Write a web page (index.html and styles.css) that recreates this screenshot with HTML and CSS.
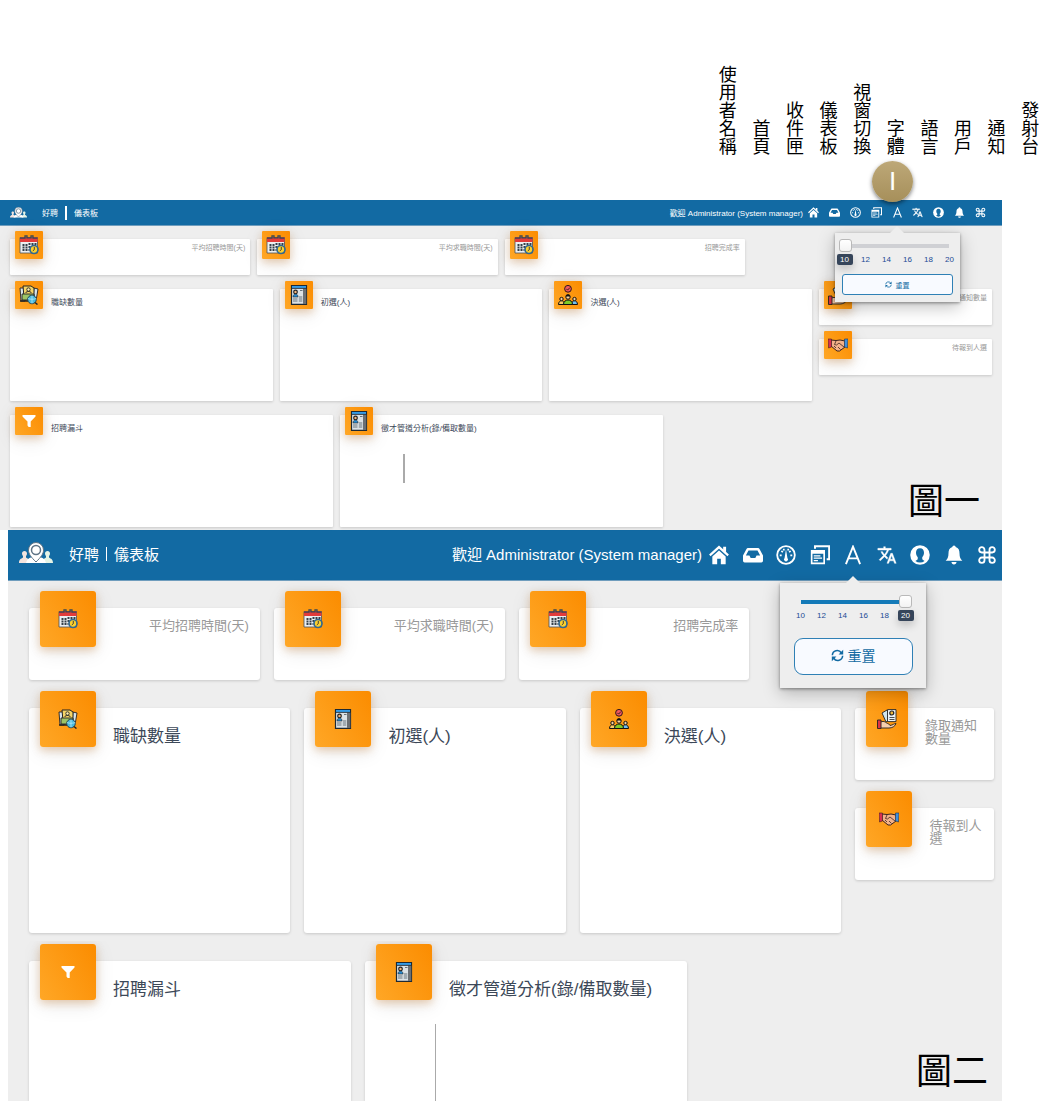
FILE: index.html
```html
<!DOCTYPE html>
<html lang="zh-Hant">
<head>
<meta charset="utf-8">
<meta name="viewport" content="width=device-width, initial-scale=1">
<title>好聘 儀表板</title>
<link rel="stylesheet" href="styles.css">
</head>
<body>
<svg class="sprite" aria-hidden="true">
  <symbol id="logo" viewBox="0 0 34 22">
    <path d="M0 21c0-4 2-4 4-5.500V14c-.6-.6-1-1.500-1-2.500C3 10 4 9 5.500 9S8 10 8 11.500c0 1-.4 1.900-1 2.500v1.500c2 1.500 4 1.500 4 5.500z" fill="#f3e4de"/>
    <path d="M23 21c0-4 2-4 4-5.500V14c-.6-.6-1-1.500-1-2.500C26 10 27 9 28.500 9s2.500 1 2.500 2.500c0 1-.4 1.900-1 2.500v1.500c2 1.500 4 1.500 4 5.500z" fill="#e4f3e6"/>
    <path d="M7 21c1-4 3-5 6-6h8c3 1 5 2 6 6z" fill="#fff"/>
    <path d="M17 20C12 15 9.500 12 9.500 8a7.500 7.500 0 0 1 15 0c0 4-2.500 7-7.500 12z" fill="#fff" stroke="#5f7486" stroke-width="1"/>
    <circle cx="17" cy="8" r="4.500" fill="#fff" stroke="#5f7486" stroke-width="1.500"/>
  </symbol>
  <symbol id="home" viewBox="0 0 24 24">
    <path d="M1 12.500 12 2.500l11 10" fill="none" stroke="currentColor" stroke-width="2.600"/>
    <path d="M17 2h3.500v7L17 6z" fill="currentColor"/>
    <path d="m12 6.500-8 7.200V23h5.800v-6.500h4.400V23H20v-9.300z" fill="currentColor"/>
  </symbol>
  <symbol id="inbox" viewBox="0 0 24 24">
    <path fill="currentColor" fill-rule="evenodd" d="M6 3.500h12a2 2 0 0 1 1.800 1.200L24 12.500V19a2 2 0 0 1-2 2H2a2 2 0 0 1-2-2v-6.500l4.200-7.800A2 2 0 0 1 6 3.500zm.6 3L3.400 12.500h4.300l1.500 3h5.600l1.500-3h4.300l-3.200-6z"/>
  </symbol>
  <symbol id="gauge" viewBox="0 0 24 24">
    <circle cx="12" cy="12" r="10.600" fill="none" stroke="currentColor" stroke-width="2.200"/>
    <path d="M12 5l1.700 10.500a2.400 2.400 0 1 1-3.400 0z" fill="currentColor"/>
    <path d="M4.500 12.500h2.300M17.200 12.500h2.300M6.500 7l1.700 1.700M17.500 7l-1.700 1.700M9 4.500l.8 2.200M15 4.500l-.8 2.200" stroke="currentColor" stroke-width="2"/>
  </symbol>
  <symbol id="windows" viewBox="0 0 24 24">
    <path d="M6 4.500V1.500h17V17h-3" fill="none" stroke="currentColor" stroke-width="2.400"/>
    <path fill="currentColor" fill-rule="evenodd" d="M1 6h17v17H1zm2 4.500v10.500h13V10.500z"/>
    <path d="M4.500 13h8M4.500 15.800h10M4.500 18.600h5" stroke="currentColor" stroke-width="1.500"/>
  </symbol>
  <symbol id="letter" viewBox="0 0 24 24">
    <path d="M3.500 23 12 2l8.500 21M6.500 16h11" fill="none" stroke="currentColor" stroke-width="2.300"/>
  </symbol>
  <symbol id="translate" viewBox="0 0 24 24">
    <path fill="currentColor" stroke="currentColor" stroke-width=".5" d="M12.870 15.070l-2.540-2.510.03-.03c1.740-1.940 2.980-4.170 3.710-6.530H17V4h-7V2H8v2H1v1.990h11.170C11.500 7.920 10.440 9.750 9 11.350 8.070 10.320 7.300 9.190 6.690 8h-2c.73 1.630 1.730 3.170 2.980 4.560l-5.090 5.020L4 19l5-5 3.110 3.110.76-2.040zM18.500 10h-2L12 22h2l1.120-3h4.750L21 22h2l-4.500-12zm-2.620 7l1.620-4.330L19.120 17h-3.240z"/>
  </symbol>
  <symbol id="user" viewBox="0 0 24 24">
    <circle cx="12" cy="12" r="11.700" fill="currentColor"/>
    <path fill="#126aa3" d="M12 4c3.300 0 4.800 2.300 4.800 5.300 0 2.300-.9 4.200-2.100 5.300v2.200c0 1 1.800 1.400 2.800 2.400A9 9 0 0 1 12 21a9 9 0 0 1-5.500-1.800c1-1 2.800-1.400 2.800-2.400v-2.200C8.100 13.500 7.200 11.600 7.200 9.300 7.200 6.300 8.700 4 12 4z"/>
  </symbol>
  <symbol id="bell" viewBox="0 0 24 24">
    <path fill="currentColor" d="M12 .5a2 2 0 0 1 2 2c3.500 1 4.600 4 4.600 7.500 0 5 1.400 7 3.400 9H2c2-2 3.400-4 3.400-9C5.400 6.500 6.500 3.500 10 2.500a2 2 0 0 1 2-2zM9 20.500h6c0 1.700-1.300 3-3 3s-3-1.300-3-3z"/>
  </symbol>
  <symbol id="command" viewBox="0 0 24 24">
    <path d="M9 9V5.800A3.200 3.200 0 1 0 5.800 9h12.400A3.200 3.200 0 1 0 15 5.800v12.400a3.200 3.200 0 1 0 3.200-3.200H5.800A3.200 3.200 0 1 0 9 18.200z" fill="none" stroke="currentColor" stroke-width="2.200"/>
  </symbol>
  <symbol id="refresh" viewBox="0 0 24 24">
    <path d="M2.500 11.500A9 9 0 0 1 19 7M21.500 12.500A9 9 0 0 1 5 17" fill="none" stroke="currentColor" stroke-width="2.800"/>
    <path d="M22.500 1.500V10H14zM1.500 22.500V14H10z" fill="currentColor"/>
  </symbol>
  <symbol id="calendar" viewBox="0 0 20 20">
    <path d="M1 2.500h17.500V18H1z" fill="#eceff1" stroke="#46505a" stroke-width=".8"/>
    <path d="M1 2.500h17.500V7H1z" fill="#e23b3b"/>
    <path d="M1 3.200h5V.8h2v2h4v-2h2v2.400h4.500" fill="none" stroke="#3b4752" stroke-width="1.300"/>
    <path d="M3.500 10h2M6.500 10h2M9.500 9h2M12.500 9h2M15.500 9h2M3.500 12.500h2M6.500 12.500h2M9.500 12h2M3.500 15h2M6.500 15h2M9.500 15h1" stroke="#35404a" stroke-width="1.800"/>
    <circle cx="15" cy="14.500" r="4" fill="#fbd02e" stroke="#33688e" stroke-width="1.700"/>
    <path d="M15.300 12v2.700l-1.500 1.200" fill="none" stroke="#333" stroke-width=".9"/>
  </symbol>
  <symbol id="vacancy" viewBox="0 0 20 20">
    <path d="M1 3h5v13H2zM15 3l4 1-1.500 9H14z" fill="#d7e4ea" stroke="#222" stroke-width=".9"/>
    <path d="M4 1h8l3 2v9H5z" fill="#f4d567" stroke="#222" stroke-width="1"/>
    <circle cx="9.500" cy="4.500" r="1.700" fill="#fff0b0" stroke="#222" stroke-width=".9"/>
    <path d="M6.500 8c1-2 5-2 6 0" fill="none" stroke="#222"/>
    <path d="M3 9h12v6H3z" fill="#9dc466" stroke="#222" stroke-width=".9"/>
    <path d="M1 16h8" stroke="#222" stroke-width="1.500"/>
    <circle cx="13" cy="14.500" r="4.300" fill="#4bb9dc" stroke="#23424f" stroke-width="1"/>
    <path d="M9 13.500c2 1 6 1 8 0M13 10.500v8" stroke="#b5ecfa" stroke-width=".8" fill="none"/>
    <path d="m16 17.500 2.500 2" stroke="#222" stroke-width="1.500"/>
  </symbol>
  <symbol id="resume" viewBox="0 0 20 20">
    <path d="M2.500.6h15v18.800h-15z" fill="#dce2e6" stroke="#1d2933" stroke-width="1.200"/>
    <path d="M14 3.500h3.300v15.500H14z" fill="#6b6f73"/>
    <path d="M3 1h14v2H3z" fill="#359be6"/>
    <path d="M2.500 3.400h15" stroke="#1d2933" stroke-width=".9"/>
    <circle cx="6.500" cy="7" r="1.800" fill="#f2b67f" stroke="#222" stroke-width="1.200"/>
    <path d="M4 12c0-4 5-4 5 0z" fill="#268bd2" stroke="#222" stroke-width=".6"/>
    <path d="M11 5.500h2.500M4 14h4.500M4 16h4.500M9.800 12h3.500M9.800 14h3.500M9.800 16h3.500" stroke="#69747c" stroke-width="1.200"/>
  </symbol>
  <symbol id="team" viewBox="0 0 20 20">
    <circle cx="10" cy="3.800" r="3.400" fill="#f15a5f" stroke="#30161a" stroke-width="1"/>
    <path d="m8.300 3.800 1.300 1.300 2.300-2.500" fill="none" stroke="#30161a" stroke-width=".9"/>
    <path d="M.5 19.500c0-5 6-5 6 0z" fill="#f8cc65" stroke="#111"/>
    <path d="M13.500 19.500c0-5 6-5 6 0z" fill="#72bff0" stroke="#111"/>
    <path d="M5.500 19.500c0-6 9-6 9 0z" fill="#7ecb29" stroke="#111"/>
    <circle cx="10" cy="12" r="2.200" fill="#f8d2a0" stroke="#111"/>
    <path d="M7.700 11.500c.3-3 4.300-3 4.600 0z" fill="#111"/>
    <circle cx="3.500" cy="14" r="1.700" fill="#f8d2a0" stroke="#111"/>
    <circle cx="16.500" cy="14" r="1.700" fill="#f8d2a0" stroke="#111"/>
  </symbol>
  <symbol id="offer" viewBox="0 0 20 20">
    <path d="m5 4 5-3 4 9-5 3z" fill="#cfe6ef" stroke="#222" stroke-width=".9"/>
    <path d="M10.500.6h8.500v12h-8.500z" fill="#edf4f7" stroke="#222" stroke-width=".9"/>
    <circle cx="14.800" cy="4" r="2" fill="#f0b93f" stroke="#222" stroke-width="1.200"/>
    <path d="M12.500 8.500h5M12.500 10.500h5" stroke="#222" stroke-width=".8"/>
    <path d="M3.500 13c4-1.500 5 .5 7 1.500s2.500 1 2.500 2c3-.5 4-2 6-2-1 3-4 4.500-7 4.500H3.500z" fill="#f8cfae" stroke="#222" stroke-width=".9"/>
    <path d="M.5 11H4v8.500H.5z" fill="#dd3345" stroke="#222" stroke-width=".9"/>
  </symbol>
  <symbol id="handshake" viewBox="0 0 20 20">
    <path d="M3 5l5 .5L12 5l5 1v6l-5.500 4L9 16l-6-5z" fill="#f3b188" stroke="#3b2320" stroke-width="1"/>
    <path d="m8 6-1.500 3.500 2 .5L11 8l5 4M6 11l2 2M10 12l2.500 2.500" fill="none" stroke="#3b2320" stroke-width=".8"/>
    <path d="M0 4h3.500v8L.5 13z" fill="#d92e50" stroke="#3b2320" stroke-width=".6"/>
    <path d="M20 4h-3.500v8l3 1z" fill="#3e8fdc" stroke="#23334d" stroke-width=".6"/>
  </symbol>
  <symbol id="filter" viewBox="0 0 20 20">
    <path fill="#fff" d="M3.500 4h13v1.500l-4.800 5V16h-2L8.500 14.500v-4l-5-5z"/>
  </symbol>
</svg>

<header class="legend">
  <ul class="legend-list">
    <li>使用者名稱</li><li>首頁</li><li>收件匣</li><li>儀表板</li><li>視窗切換</li><li>字體</li><li>語言</li><li>用戶</li><li>通知</li><li>發射台</li>
  </ul>
</header>

<main>
<section class="dash dash-small">
  <div class="bar">
    <svg class="logo"><use href="#logo"/></svg>
    <h1 class="brand"><span>好聘</span><span class="brand-page">儀表板</span></h1>
    <p class="welcome">歡迎 Administrator (System manager)</p>
    <nav class="tools">
      <button type="button" class="tool" aria-label="首頁"><svg><use href="#home"/></svg></button>
      <button type="button" class="tool" aria-label="收件匣"><svg><use href="#inbox"/></svg></button>
      <button type="button" class="tool" aria-label="儀表板"><svg><use href="#gauge"/></svg></button>
      <button type="button" class="tool" aria-label="視窗切換"><svg><use href="#windows"/></svg></button>
      <div class="tool-menu">
        <span class="marker">I</span>
        <button type="button" class="tool" aria-label="字體"><svg><use href="#letter"/></svg></button>
        <form class="popup">
          <input class="size-range" type="range" min="10" max="20" step="2" value="10" aria-label="字體大小">
          <div class="ticks"><span class="tick-on">10</span><span>12</span><span>14</span><span>16</span><span>18</span><span>20</span></div>
          <button type="button" class="reset"><svg><use href="#refresh"/></svg>重置</button>
        </form>
      </div>
      <button type="button" class="tool" aria-label="語言"><svg><use href="#translate"/></svg></button>
      <button type="button" class="tool" aria-label="用戶"><svg><use href="#user"/></svg></button>
      <button type="button" class="tool" aria-label="通知"><svg><use href="#bell"/></svg></button>
      <button type="button" class="tool" aria-label="發射台"><svg><use href="#command"/></svg></button>
    </nav>
  </div>
  <div class="content">
    <div class="row row-stats">
      <article class="card stat"><span class="tile"><svg><use href="#calendar"/></svg></span><p class="label">平均招聘時間(天)</p></article>
      <article class="card stat"><span class="tile"><svg><use href="#calendar"/></svg></span><p class="label">平均求職時間(天)</p></article>
      <article class="card stat"><span class="tile"><svg><use href="#calendar"/></svg></span><p class="label">招聘完成率</p></article>
    </div>
    <div class="row row-stages">
      <article class="card chart"><span class="tile"><svg><use href="#vacancy"/></svg></span><h2 class="title">職缺數量</h2></article>
      <article class="card chart"><span class="tile"><svg><use href="#resume"/></svg></span><h2 class="title">初選(人)</h2></article>
      <article class="card chart"><span class="tile"><svg><use href="#team"/></svg></span><h2 class="title">決選(人)</h2></article>
      <div class="side">
        <article class="card stat"><span class="tile"><svg><use href="#offer"/></svg></span><p class="label">錄取通知數量</p></article>
        <article class="card stat"><span class="tile"><svg><use href="#handshake"/></svg></span><p class="label">待報到人選</p></article>
      </div>
    </div>
    <div class="row row-analysis">
      <article class="card chart"><span class="tile"><svg><use href="#filter"/></svg></span><h2 class="title">招聘漏斗</h2></article>
      <article class="card chart"><span class="tile"><svg><use href="#resume"/></svg></span><div class="chart-body"><h2 class="title">徵才管道分析(錄/備取數量)</h2><div class="axis"></div></div></article>
      <p class="figure-name">圖一</p>
    </div>
  </div>
</section>

<section class="dash dash-large">
  <div class="bar">
    <svg class="logo"><use href="#logo"/></svg>
    <h1 class="brand"><span>好聘</span><span class="brand-page">儀表板</span></h1>
    <p class="welcome">歡迎 Administrator (System manager)</p>
    <nav class="tools">
      <button type="button" class="tool" aria-label="首頁"><svg><use href="#home"/></svg></button>
      <button type="button" class="tool" aria-label="收件匣"><svg><use href="#inbox"/></svg></button>
      <button type="button" class="tool" aria-label="儀表板"><svg><use href="#gauge"/></svg></button>
      <button type="button" class="tool" aria-label="視窗切換"><svg><use href="#windows"/></svg></button>
      <div class="tool-menu">
        <button type="button" class="tool" aria-label="字體"><svg><use href="#letter"/></svg></button>
        <form class="popup">
          <input class="size-range" type="range" min="10" max="20" step="2" value="20" aria-label="字體大小">
          <div class="ticks"><span>10</span><span>12</span><span>14</span><span>16</span><span>18</span><span class="tick-on">20</span></div>
          <button type="button" class="reset"><svg><use href="#refresh"/></svg>重置</button>
        </form>
      </div>
      <button type="button" class="tool" aria-label="語言"><svg><use href="#translate"/></svg></button>
      <button type="button" class="tool" aria-label="用戶"><svg><use href="#user"/></svg></button>
      <button type="button" class="tool" aria-label="通知"><svg><use href="#bell"/></svg></button>
      <button type="button" class="tool" aria-label="發射台"><svg><use href="#command"/></svg></button>
    </nav>
  </div>
  <div class="content">
    <div class="row row-stats">
      <article class="card stat"><span class="tile"><svg><use href="#calendar"/></svg></span><p class="label">平均招聘時間(天)</p></article>
      <article class="card stat"><span class="tile"><svg><use href="#calendar"/></svg></span><p class="label">平均求職時間(天)</p></article>
      <article class="card stat"><span class="tile"><svg><use href="#calendar"/></svg></span><p class="label">招聘完成率</p></article>
    </div>
    <div class="row row-stages">
      <article class="card chart"><span class="tile"><svg><use href="#vacancy"/></svg></span><h2 class="title">職缺數量</h2></article>
      <article class="card chart"><span class="tile"><svg><use href="#resume"/></svg></span><h2 class="title">初選(人)</h2></article>
      <article class="card chart"><span class="tile"><svg><use href="#team"/></svg></span><h2 class="title">決選(人)</h2></article>
      <div class="side">
        <article class="card stat"><span class="tile"><svg><use href="#offer"/></svg></span><p class="label">錄取通知數量</p></article>
        <article class="card stat"><span class="tile"><svg><use href="#handshake"/></svg></span><p class="label">待報到人選</p></article>
      </div>
    </div>
    <div class="row row-analysis">
      <article class="card chart"><span class="tile"><svg><use href="#filter"/></svg></span><h2 class="title">招聘漏斗</h2></article>
      <article class="card chart"><span class="tile"><svg><use href="#resume"/></svg></span><div class="chart-body"><h2 class="title">徵才管道分析(錄/備取數量)</h2><div class="axis"></div></div></article>
      <p class="figure-name">圖二</p>
    </div>
  </div>
</section>
</main>
</body>
</html>
```
FILE: styles.css
```css
* { box-sizing: border-box; }

body {
  margin: 0;
  background: #fff;
  color: #000;
  font-family: "Liberation Sans", "Noto Sans CJK TC", sans-serif;
}

h1, h2, p, ul { margin: 0; padding: 0; font-weight: 400; }
svg { display: block; }
button { font-family: inherit; cursor: pointer; }
.sprite { position: absolute; width: 0; height: 0; }

/* vertical names of the toolbar icons */
.legend {
  display: flex;
  justify-content: flex-end;
  align-items: flex-end;
  height: 200px;
  padding: 0 13px 45px 0;
}
.legend-list {
  display: grid;
  grid-template-columns: repeat(10, 1fr);
  align-items: end;
  justify-items: center;
  width: 336px;
  list-style: none;
  font-size: 18px;
  line-height: 18px;
}
.legend-list li { writing-mode: vertical-rl; }

/* shared dashboard; the two text sizes set the measures */
.dash { margin-right: 56px; background: #eee; }

.dash-small {
  --bar: 26px; --bar-text: 8px; --bar-left: 10px; --bar-right: 16px; --text-up: 0;
  --logo-w: 17px; --logo-h: 11px; --logo-gap: 15px; --logo-up: 1px;
  --brand-gap: 7px; --brand-line: 2px; --brand-line-h: 14px;
  --nav: 178px; --icon: 11px; --nav-gap: 5px;
  --pad: 13px 10px 3px; --gap: 7px; --row-gap: 14px;
  --stat: 36px; --chart: 112px; --last: 112px; --radius: 1px;
  --card-pad: 5px; --tile: 28px; --tile-up: -8px; --tile-gap: 8px;
  --label: 7px; --label-line: 8px; --title: 8px; --title-top: 8px; --title-line: 12px;
  --stages: 263fr 263fr 263fr 173fr; --analysis: 323fr 323fr 322fr;
  --axis-w: 2px; --axis-top: 19px; --axis-left: 22px; --axis-h: 29px;
  --popup: 125px; --popup-pad: 6px 3px 7px; --popup-top: 26px;
  --tick-top: 2px; --reset-top: 9px; --reset-w: 111px; --reset-h: 21px; --reset-radius: 3px; --reset-text: 7px; --reset-icon: 7px;
  --name-pad: 0 12px 0 0;
}
.dash-large {
  --bar: 51px; --bar-text: 15px; --bar-left: 11px; --bar-right: 5px; --text-up: 3px;
  --logo-w: 34px; --logo-h: 22px; --logo-gap: 16px; --logo-up: 4px;
  --brand-gap: 7px; --brand-line: 1px; --brand-line-h: 14px;
  --nav: 288px; --icon: 20px; --nav-gap: 7px;
  --pad: 27px 8px 0 21px; --gap: 14px; --row-gap: 28px;
  --stat: 72px; --chart: 225px; --last: 140px; --radius: 3px;
  --card-pad: 11px; --tile: 56px; --tile-up: -17px; --tile-gap: 17px;
  --label: 13px; --label-line: 13px; --title: 17px; --title-top: 17px; --title-line: 24px;
  --stages: 262fr 262fr 262fr 139fr; --analysis: 322fr 322fr 293fr;
  --axis-w: 1px; --axis-top: 22px; --axis-left: -14px; --axis-h: 77px;
  --popup: 146px; --popup-pad: 12px 14px 13px; --popup-top: 38px;
  --tick-top: 2px; --reset-top: 17px; --reset-w: 119px; --reset-h: 37px; --reset-radius: 9px; --reset-text: 14px; --reset-icon: 13px;
  --name-pad: 0 6px 4px 0;
  margin-left: 8px;
}

.bar {
  display: flex;
  align-items: center;
  height: var(--bar);
  padding: 0 var(--bar-right) 0 var(--bar-left);
  background: #126aa3;
  border-bottom: 1px solid #6f9dbd;
  color: #fff;
  font-size: var(--bar-text);
}
.logo { width: var(--logo-w); height: var(--logo-h); margin: 0 var(--logo-gap) var(--logo-up) 0; }
.brand { display: flex; align-items: center; padding-bottom: var(--text-up); font-size: inherit; }
.brand-page { display: flex; align-items: center; }
.brand-page::before {
  content: "";
  width: var(--brand-line);
  height: var(--brand-line-h);
  margin: 0 var(--brand-gap);
  background: #fff;
}
.welcome { margin: 0 var(--nav-gap) 0 auto; padding-bottom: var(--text-up); }
.tools { display: flex; justify-content: space-between; align-items: center; width: var(--nav); }
.tool { display: block; padding: 0; border: 0; background: none; color: #fff; }
.tool svg { width: var(--icon); height: var(--icon); }
.tool-menu { position: relative; }

.marker {
  position: absolute;
  bottom: 16px;
  left: 50%;
  display: flex;
  align-items: center;
  justify-content: center;
  width: 41px;
  height: 41px;
  margin-left: -25px;
  border-radius: 50%;
  background: linear-gradient(#bda878, #a68f5a);
  box-shadow: 0 2px 4px rgba(0, 0, 0, .5);
  color: #fff;
  font-size: 26px;
}

.popup {
  position: absolute;
  z-index: 2;
  top: var(--popup-top);
  left: 50%;
  display: flex;
  flex-direction: column;
  align-items: center;
  width: var(--popup);
  margin-left: calc(var(--popup) / -2);
  padding: var(--popup-pad);
  background: #eee;
  box-shadow: 0 1px 3px rgba(0, 0, 0, .4), 0 5px 16px rgba(0, 0, 0, .25);
}
.popup::before {
  content: "";
  position: absolute;
  bottom: 100%;
  left: 50%;
  margin-left: -7px;
  border: 7px solid transparent;
  border-top: 0;
  border-bottom-color: #eee;
}
.size-range {
  appearance: none;
  width: 117px;
  height: 13px;
  margin: 0;
  background: linear-gradient(#cfd0d4, #cfd0d4) center / 104px 4px no-repeat;
}
.dash-large .size-range { background-image: linear-gradient(#147ab8, #147ab8); }
.size-range::-webkit-slider-thumb {
  appearance: none;
  width: 13px;
  height: 13px;
  border: 1px solid #b9b9b9;
  border-radius: 3px;
  background: linear-gradient(#fff, #f3f3f3);
}
.ticks {
  display: flex;
  justify-content: space-between;
  width: 121px;
  margin-top: var(--tick-top);
  color: #1c4a94;
  font-size: 8px;
  line-height: 11px;
}
.ticks span { width: 16px; border-radius: 2px; text-align: center; }
.ticks .tick-on { background: #36455a; color: #fff; box-shadow: 0 4px 8px rgba(0, 0, 0, .2); }
.reset {
  display: flex;
  align-items: center;
  justify-content: center;
  gap: 4px;
  width: var(--reset-w);
  height: var(--reset-h);
  margin-top: var(--reset-top);
  padding: 0 0 var(--text-up);
  border: 1px solid #2f80b5;
  border-radius: var(--reset-radius);
  background: #f8faff;
  color: #126aa3;
  font-size: var(--reset-text);
}
.reset svg { width: var(--reset-icon); height: var(--reset-icon); }

.content { display: flex; flex-direction: column; gap: var(--row-gap); padding: var(--pad); }
.row { display: grid; gap: var(--gap); }
.row-stats { grid-template-columns: repeat(4, 1fr); }
.row-stages { grid-template-columns: var(--stages); }
.row-analysis { grid-template-columns: var(--analysis); }
.side { display: flex; flex-direction: column; gap: var(--row-gap); }

.card {
  display: flex;
  align-items: flex-start;
  gap: var(--tile-gap);
  min-width: 0;
  padding: 0 var(--card-pad);
  border-radius: var(--radius);
  background: #fff;
  box-shadow: 0 1px 3px rgba(0, 0, 0, .16);
}
.stat { min-height: var(--stat); }
.chart { min-height: var(--chart); }
.row-analysis .chart { min-height: var(--last); }
.dash-large .row-analysis .chart { border-radius: 3px 3px 0 0; clip-path: inset(-20px -4px 0); }

.tile {
  display: flex;
  align-items: center;
  justify-content: center;
  width: var(--tile);
  height: var(--tile);
  margin-top: var(--tile-up);
  border-radius: var(--radius);
  background: linear-gradient(60deg, #ffa726, #fb8c00);
  box-shadow: 0 3px 8px rgba(200, 110, 20, .3), 0 5px 20px rgba(0, 0, 0, .1);
}
.chart .tile { flex-shrink: 0; }
.tile svg { flex-shrink: 0; width: 20px; height: 20px; }

.label {
  margin-left: auto;
  padding-top: var(--card-pad);
  color: #999;
  font-size: var(--label);
  line-height: var(--label-line);
}
.title {
  padding-top: var(--title-top);
  color: #3c4858;
  font-size: var(--title);
  line-height: var(--title-line);
  white-space: nowrap;
}
.axis {
  width: var(--axis-w);
  height: var(--axis-h);
  margin: var(--axis-top) 0 0 var(--axis-left);
  background: #aaa;
}

.figure-name {
  align-self: end;
  justify-self: end;
  padding: var(--name-pad);
  font-size: 36px;
  line-height: 50px;
}
```
